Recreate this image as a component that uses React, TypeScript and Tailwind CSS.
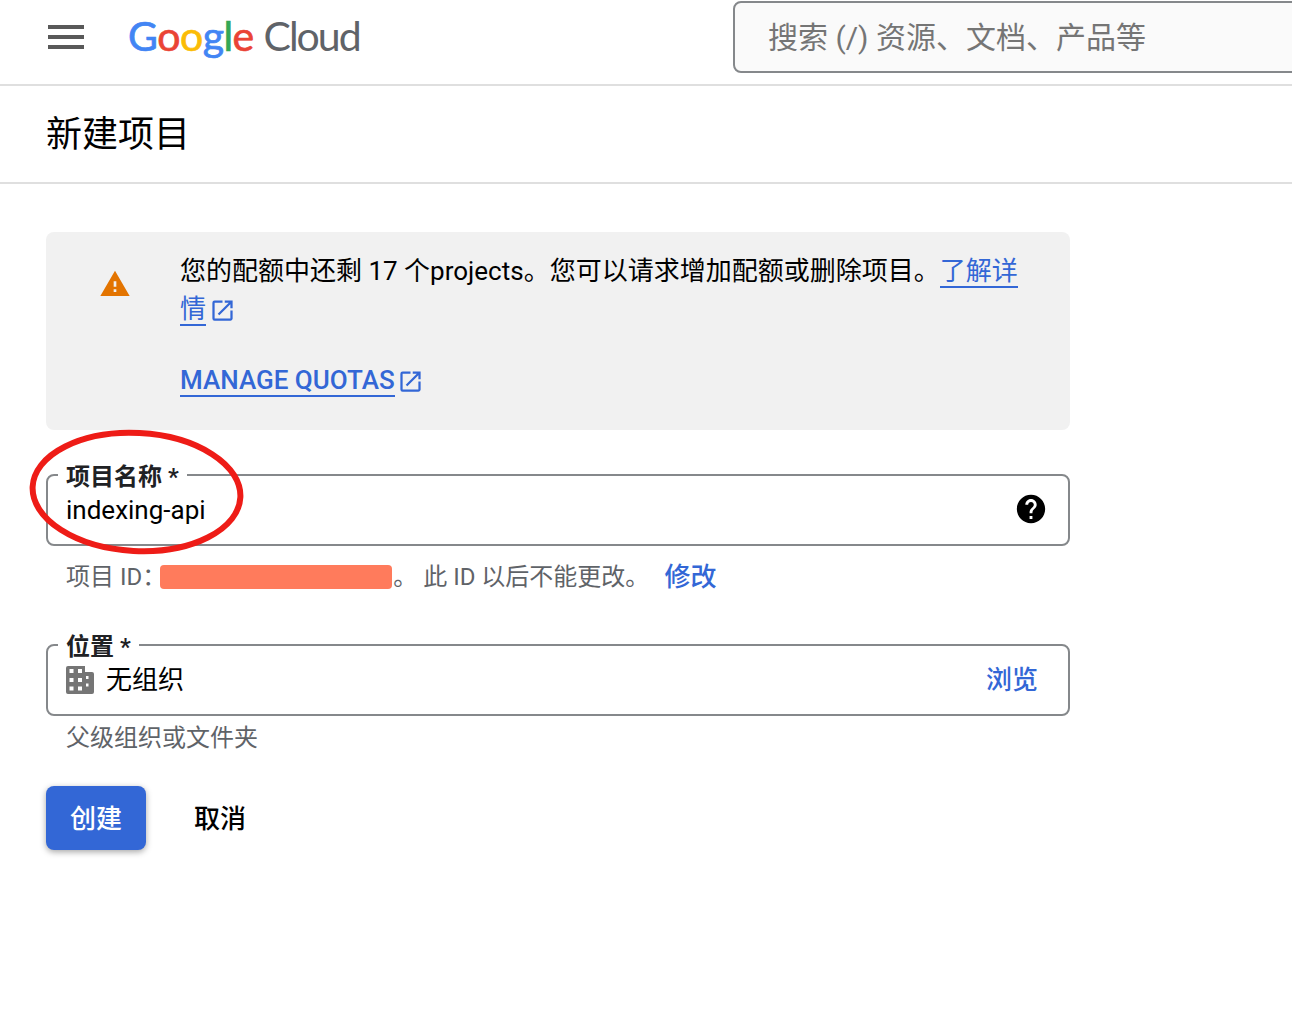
const FONT = "font-['Roboto','Noto_Sans_CJK_SC',sans-serif]";

function ExternalIcon() {
  return (
    <svg width="27" height="27" viewBox="0 0 24 24" fill="#3367d6" className="inline-block shrink-0">
      <path d="M19 19H5V5h7V3H5a2 2 0 0 0-2 2v14a2 2 0 0 0 2 2h14c1.1 0 2-.9 2-2v-7h-2v7zM14 3v2h3.59l-9.83 9.83 1.41 1.41L19 6.41V10h2V3h-7z" />
    </svg>
  );
}

function Logo() {
  return (
    <div className="mb-[4px] flex items-baseline text-[41px] leading-none font-['Lato',sans-serif] tracking-[-0.6px]">
      <span className="text-[#4285f4] [-webkit-text-stroke:0.7px_#4285f4]">G</span>
      <span className="text-[#ea4335] [-webkit-text-stroke:0.7px_#ea4335]">o</span>
      <span className="text-[#fbbc05] [-webkit-text-stroke:0.7px_#fbbc05]">o</span>
      <span className="text-[#4285f4] [-webkit-text-stroke:0.7px_#4285f4]">g</span>
      <span className="text-[#34a853] [-webkit-text-stroke:0.7px_#34a853]">l</span>
      <span className="text-[#ea4335] [-webkit-text-stroke:0.7px_#ea4335]">e</span>
      <span className="ml-[10px] text-[#5f6368] tracking-[-2px]">Cloud</span>
    </div>
  );
}

export default function App() {
  return (
    <div className={`${FONT} h-[1012px] w-[1292px] overflow-hidden bg-white text-black`}>
      <header className="flex h-[86px] items-center border-b-2 border-[#dfdfdf] pb-[10px]">
        <div className="ml-12 flex w-[36px] flex-col gap-[6px]">
          <span className="h-1 bg-[#595959]" />
          <span className="h-1 bg-[#595959]" />
          <span className="h-1 bg-[#595959]" />
        </div>
        <div className="ml-[44px]"><Logo /></div>
        <div className="ml-auto flex h-[72px] w-[600px] shrink-0 translate-x-[41px] items-center rounded-lg border-2 border-[#85888b] bg-[#fafafa] pl-[33px] text-[30px] text-[#757575]">
          搜索 (/) 资源、文档、产品等
        </div>
      </header>

      <div className="flex h-[98px] items-center border-b-2 border-[#dfdfdf] pl-[46px] pt-[2px] text-[36px]">新建项目</div>

      <main className="ml-[46px] w-[1024px] pt-12">
        <section className="flex h-[198px] rounded-lg bg-[#f1f1f1] pt-[19px]">
          <div className="w-[134px] shrink-0 pl-[53px] pt-[17px]">
            <svg width="32" height="32" viewBox="0 0 24 24" fill="#e37400">
              <path d="M1 21h22L12 2 1 21zm12-3h-2v-2h2v2zm0-4h-2v-4h2v4z" />
            </svg>
          </div>
          <div className="w-[860px] text-[26px] leading-[40px]">
            <p>
              您的配额中还剩 17 个projects。您可以请求增加配额或删除项目。
              <a className="border-b-2 border-[#3367d6] text-[#3367d6]">了解详</a>
            </p>
            <p className="-mt-[1px] flex h-10 items-center">
              <a className="border-b-2 border-[#3367d6] leading-[30px] text-[#3367d6]">情</a>
              <span className="ml-[3px] flex"><ExternalIcon /></span>
            </p>
            <p className="mt-[31px] flex h-10 items-center font-medium text-[#3367d6]">
              <a className="border-b-2 border-[#3367d6] leading-[30px]">MANAGE QUOTAS</a>
              <span className="ml-[2px] flex"><ExternalIcon /></span>
            </p>
          </div>
        </section>

        <div className="relative mt-[44px] flex h-[72px] items-center rounded-lg border-2 border-[#85888b] pl-[18px] pr-[20px] text-[26px]">
          <span className="absolute -top-[14px] left-[10px] bg-white px-[8px] text-[24px] font-semibold leading-[30px] text-[#202124]">项目名称 *</span>
          <span className="flex-1">indexing-api</span>
          <svg width="34" height="34" viewBox="0 0 24 24" fill="#000" className="mb-[2px]"><path d="M12 2C6.48 2 2 6.48 2 12s4.48 10 10 10 10-4.48 10-10S17.52 2 12 2zm1 17h-2v-2h2v2zm2.07-7.75-.9.92C13.45 12.9 13 13.5 13 15h-2v-.5c0-1.1.45-2.1 1.17-2.83l1.24-1.26c.37-.36.59-.86.59-1.41 0-1.1-.9-2-2-2s-2 .9-2 2H8c0-2.21 1.79-4 4-4s4 1.79 4 4c0 .88-.36 1.68-.93 2.25z"/></svg>
        </div>

        <div className="mt-[14px] flex h-[34px] items-center pl-5 text-[24px] text-[#5f6368]">
          <span>项目 ID：</span>
          <span className="-ml-[6px] h-[24px] w-[232px] rounded-[4px] bg-[#ff7b5c]" />
          <span className="ml-[1px]">。 此 ID 以后不能更改。</span>
          <a className="ml-[15px] text-[26px] font-medium text-[#3367d6]">修改</a>
        </div>

        <div className="relative mt-[50px] flex h-[72px] items-center rounded-lg border-2 border-[#85888b] pl-[18px] pr-[30px] text-[26px]">
          <span className="absolute -top-[14px] left-[10px] bg-white px-[8px] text-[24px] font-semibold leading-[30px] text-[#202124]">位置 *</span>
          <svg width="28" height="28" viewBox="0 0 28 28" className="shrink-0">
            <path fill="#757575" d="M2 0H19V6H26a2 2 0 0 1 2 2V26a2 2 0 0 1-2 2H2a2 2 0 0 1-2-2V2a2 2 0 0 1 2-2z" />
            <g fill="#fff">
              <rect x="3.500" y="3" width="4" height="4" />
              <rect x="12" y="3" width="4" height="4" />
              <rect x="3.500" y="12" width="4" height="4" />
              <rect x="12" y="12" width="4" height="4" />
              <rect x="3.500" y="20.500" width="4" height="4" />
              <rect x="12" y="20.500" width="4" height="4" />
              <rect x="20" y="10" width="2.500" height="3" />
              <rect x="20" y="17.500" width="2.500" height="3" />
            </g>
          </svg>
          <span className="ml-3 flex-1">无组织</span>
          <a className="font-medium text-[#3367d6]">浏览</a>
        </div>

        <div className="mt-[6px] pl-5 text-[24px] leading-[32px] text-[#5f6368]">父级组织或文件夹</div>

        <div className="mt-[32px] flex items-center">
          <button className="h-16 w-[100px] rounded-lg bg-[#3367d6] pt-[3px] text-[26px] font-medium text-white shadow-[0_2px_6px_rgba(0,0,0,0.35)]">创建</button>
          <button className="ml-[48px] pt-[3px] text-[26px] font-medium text-black">取消</button>
        </div>
      </main>

      <svg className="pointer-events-none absolute left-[26px] top-[426px]" width="222" height="132" viewBox="0 0 222 132" fill="none">
        <ellipse cx="110.500" cy="66" rx="104" ry="59" stroke="#ee1c17" strokeWidth="6" transform="rotate(3 110.500 66)" />
      </svg>
    </div>
  );
}
